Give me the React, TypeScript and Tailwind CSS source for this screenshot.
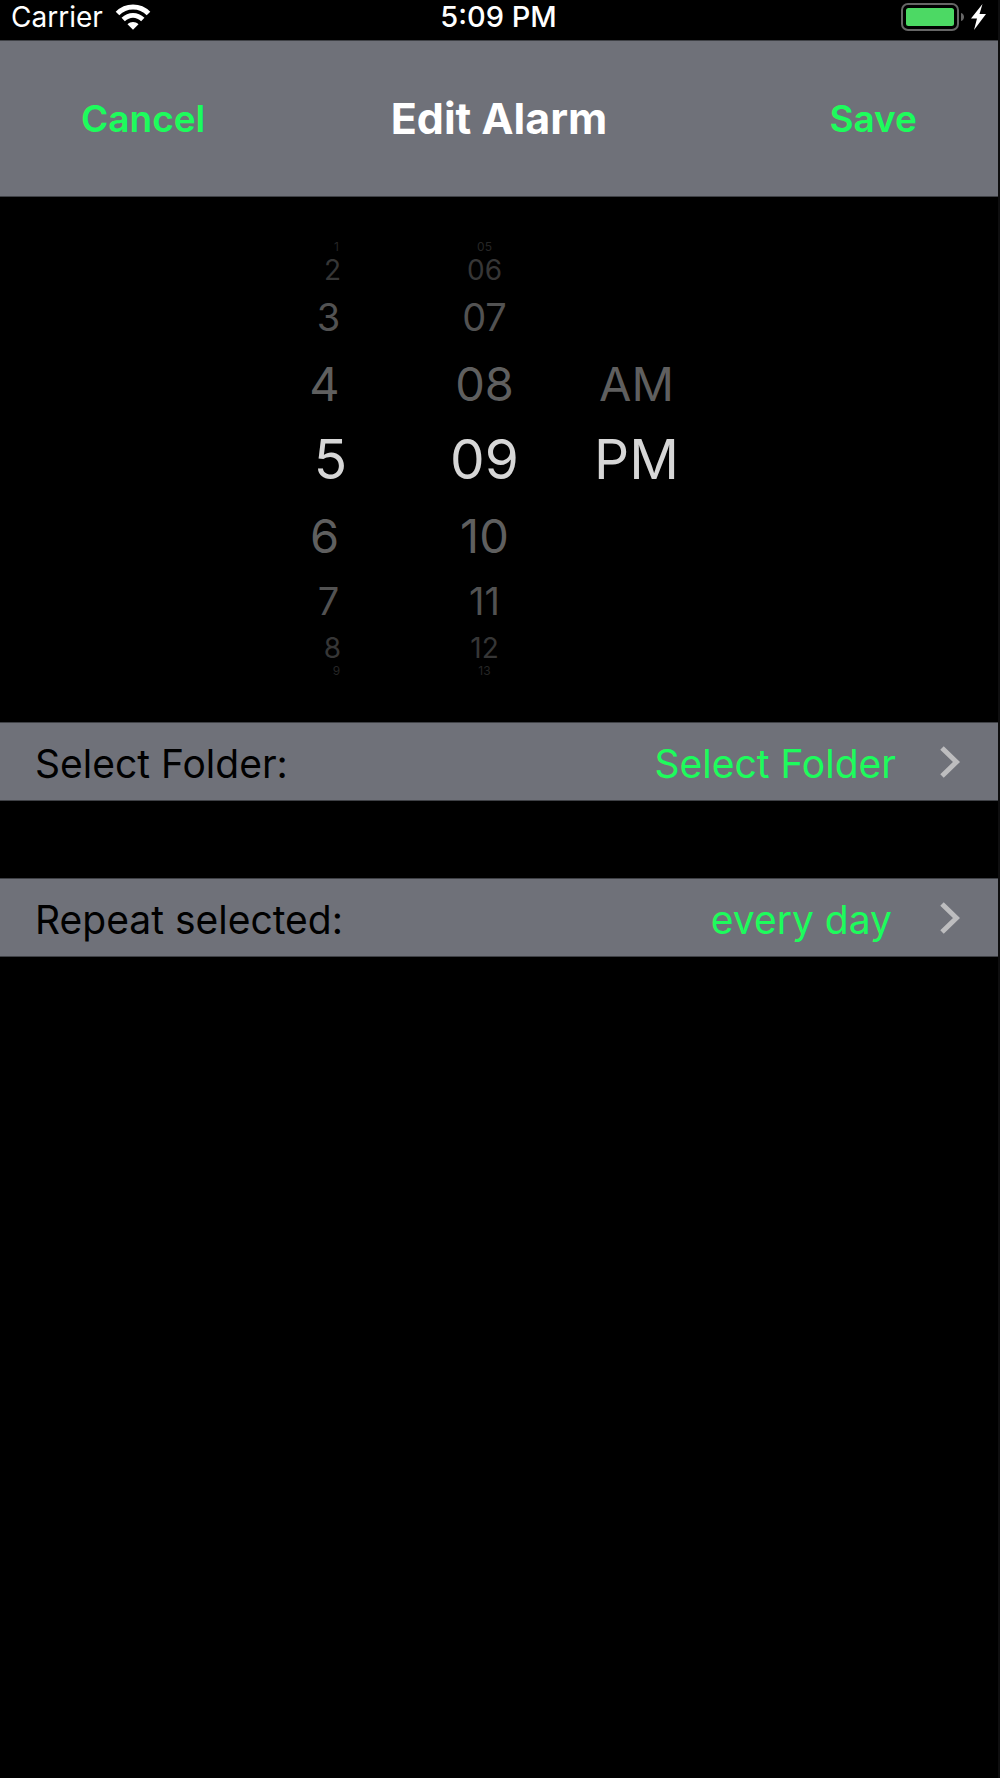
import React from "react";

type WheelProps = {
  name: string;
  label: string;
  rows: string[];
  className?: string;
  shifts?: string[];
};

// the wheel fades and shrinks away from the middle row
const ROW_STYLES = [
  "h-3 text-[12px] text-[#262626]",
  "h-[34px] text-[28px] text-[#363636]",
  "h-[60px] text-[38px] text-[#525252]",
  "h-[72px] text-[47px] text-[#5f5f5f]",
  "h-20 text-[55px] text-[#d6d6d6]",
  "h-[72px] text-[47px] text-[#5f5f5f]",
  "h-[60px] text-[38px] text-[#525252]",
  "h-[34px] text-[28px] text-[#363636]",
  "h-3 text-[12px] text-[#262626]",
];

const HOUR_SHIFTS = ["pl-4", "pl-2", "", "pr-2", "pl-1", "pr-2", "", "pl-2", "pl-4"];

const HOURS = ["1", "2", "3", "4", "5", "6", "7", "8", "9"];
const MINUTES = ["05", "06", "07", "08", "09", "10", "11", "12", "13"];
const PERIODS = ["", "", "", "AM", "PM", "", "", "", ""];

const Wheel = ({ name, label, rows, className = "", shifts = [] }: WheelProps) => {
  return (
    <div role="radiogroup" aria-label={label} className={`flex flex-col ${className}`}>
      {rows.map((row, i) =>
        row === "" ? (
          <div key={i} className={ROW_STYLES[i]} />
        ) : (
          <label
            key={i}
            className={`relative flex items-center justify-center leading-none cursor-pointer ${ROW_STYLES[i]} ${shifts[i] ?? ""}`}
          >
            <input type="radio" name={name} value={row} defaultChecked={i === 4} className="sr-only" />
            {row}
          </label>
        )
      )}
    </div>
  );
};

const StatusBar = () => {
  return (
    <div className="grid grid-cols-[1fr_auto_1fr] items-center h-10 pl-[11px] pr-3 pb-1.5 text-white">
      <div className="flex items-center gap-3">
        <span className="text-[28px] leading-8">Carrier</span>
        <svg width="36" height="26" viewBox="0 0 36 26" aria-hidden="true">
          <path d="M2.5 9.500C11 0.800 25 0.800 33.500 9.500" fill="none" stroke="white" strokeWidth="5" />
          <path d="M8.200 15.500C14 9.900 22 9.900 27.800 15.500" fill="none" stroke="white" strokeWidth="4.800" />
          <path d="M12.500 20.300C15.500 17.200 20.500 17.200 23.500 20.300L18 25.800Z" fill="white" />
        </svg>
      </div>
      <span className="text-[29px] leading-8 font-medium">5:09 PM</span>
      <div className="flex items-center justify-end gap-1.5">
        <svg width="64" height="28" viewBox="0 0 64 28" aria-hidden="true">
          <rect x="1" y="1" width="56" height="26" rx="6" fill="none" stroke="#666" strokeWidth="2" />
          <rect x="5" y="5" width="48" height="18" rx="2.500" fill="#4cd964" />
          <path d="M60 10C64 11 64 17 60 18Z" fill="#666" />
        </svg>
        <svg width="15" height="26" viewBox="0 0 15 26" aria-hidden="true">
          <path d="M11.500 0L0 14.500H6L3 26L15 10H8.500Z" fill="white" />
        </svg>
      </div>
    </div>
  );
};

const SettingRow = ({ label, value, valueClass }: { label: string; value: string; valueClass: string }) => {
  return (
    <button
      type="button"
      className="flex items-center w-full h-[79px] pl-[35px] pr-[38px] bg-[#6f7179] border-y border-[#3f4146] text-[39px] leading-none text-left cursor-pointer"
    >
      <span className="flex-1 pt-[3px] text-black">{label}</span>
      <span className={`pt-[3px] text-[#1dfc5c] ${valueClass}`}>{value}</span>
      <svg width="20" height="32" viewBox="0 0 20 32" aria-hidden="true">
        <path d="M2 2L16.500 16L2 30" fill="none" stroke="#bdbdbf" strokeWidth="5" />
      </svg>
    </button>
  );
};

export default function App() {
  return (
    <main className="min-h-screen bg-black border-r-2 border-[#0e0e0f] font-['Inter',sans-serif]">
      <StatusBar />

      <header className="grid grid-cols-[1fr_auto_1fr] items-center h-[157px] px-[81px] bg-[#6f7179] border-y border-[#3f4146]">
        <button type="button" className="justify-self-start text-[37px] font-semibold text-[#1dfc5c] cursor-pointer">
          Cancel
        </button>
        <h1 className="text-[43px] font-bold text-white">Edit Alarm</h1>
        <button type="button" className="justify-self-end text-[37px] font-semibold text-[#1dfc5c] cursor-pointer">
          Save
        </button>
      </header>

      <section className="flex justify-center pt-11 pb-[45px] pr-[37px]">
        <Wheel name="hour" label="Hour" rows={HOURS} shifts={HOUR_SHIFTS} className="w-[156px]" />
        <Wheel name="minute" label="Minute" rows={MINUTES} className="w-[156px]" />
        <Wheel name="period" label="AM or PM" rows={PERIODS} className="w-[148px]" />
      </section>

      <div className="flex flex-col gap-[77px]">
        <SettingRow label="Select Folder:" value="Select Folder" valueClass="mr-11" />
        <SettingRow label="Repeat selected:" value="every day" valueClass="mr-12" />
      </div>
    </main>
  );
}
